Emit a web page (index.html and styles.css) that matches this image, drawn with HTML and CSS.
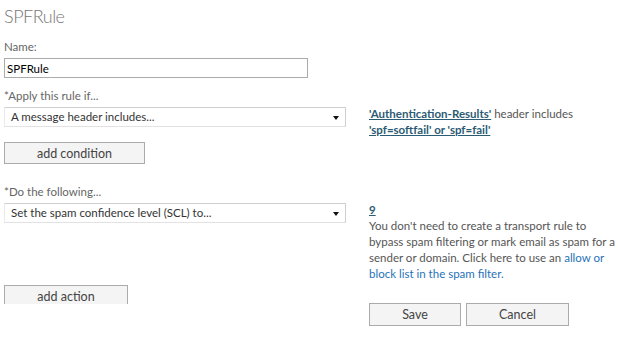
FILE: index.html
```html
<!DOCTYPE html>
<html lang="en">
<head>
    <meta charset="UTF-8">
    <title>SPFRule</title>
    <link rel="stylesheet" href="styles.css">
</head>
<body>
    <h1 class="title">SPFRule</h1>

    <div class="field-label">Name:</div>
    <input class="name-input" type="text" value="SPFRule">

    <div class="rule-row">
        <div class="rule-main">
            <div class="field-label-top">*Apply this rule if...</div>
            <div class="dropdown">A message header includes...</div>
            <button class="add-btn condition-btn">add condition</button>
        </div>
        <div class="rule-side">
            <a class="value-link" href="#">'Authentication-Results'</a> header includes
            <br>
            <a class="value-link" href="#">'spf=softfail' or 'spf=fail'</a>
        </div>
    </div>

    <div class="rule-row action-row">
        <div class="rule-main">
            <div class="field-label-top">*Do the following...</div>
            <div class="dropdown">Set the spam confidence level (SCL) to...</div>
            <div class="action-clip">
                <button class="add-btn action-btn">add action</button>
            </div>
        </div>
        <div class="rule-side">
            <a class="value-link" href="#">9</a>
            <p class="hint">
                You don't need to create a transport rule to bypass spam filtering or mark email as spam for a sender or domain. Click here to use an <a class="plain-link" href="#">allow or block list in the spam filter.</a>
            </p>
            <div class="buttons">
                <button class="footer-btn save-btn">Save</button>
                <button class="footer-btn cancel-btn">Cancel</button>
            </div>
        </div>
    </div>
</body>
</html>
```

FILE: styles.css
```css
body {
    margin: 0;
    padding: 4px 0 0 4px;
    background: #fff;
    font-family: Lato, "Open Sans", sans-serif;
    font-size: 11.5px;
    color: #555;
}
.title {
    margin: 0;
    font-size: 18px;
    line-height: 24px;
    font-weight: 300;
    letter-spacing: -0.5px;
    color: #777;
}
.field-label {
    margin-top: 11px;
    line-height: 16px;
    color: #666;
}
.field-label-top {
    line-height: 16px;
    color: #666;
}
.name-input {
    display: block;
    margin: 3px 0 0 0;
    width: 304px;
    height: 20px;
    box-sizing: border-box;
    border: 1px solid #ababab;
    padding: 0 2px;
    font-family: inherit;
    font-size: 11.5px;
    color: #000;
    outline: none;
}
.rule-row {
    display: flex;
    margin-top: 10px;
}
.action-row {
    margin-top: 20px;
}
.rule-main {
    width: 342px;
    flex-shrink: 0;
}
.rule-side {
    margin-left: 23px;
    padding-top: 18px;
    line-height: 16px;
    width: 249px;
}
.dropdown {
    position: relative;
    margin-top: 3px;
    height: 20px;
    box-sizing: border-box;
    border: 1px solid #cfcfcf;
    border-left-color: #eaeaea;
    border-bottom-color: #e2e2e2;
    padding-left: 6px;
    line-height: 18px;
    color: #333;
}
.dropdown::after {
    content: "";
    position: absolute;
    right: 6px;
    top: 8px;
    border-left: 3.5px solid transparent;
    border-right: 3.5px solid transparent;
    border-top: 4px solid #111;
}
.add-btn {
    display: block;
    height: 22px;
    box-sizing: border-box;
    border: 1px solid #ababab;
    background: #f4f4f4;
    font-family: inherit;
    font-size: 12.5px;
    color: #444;
    padding: 0;
}
.condition-btn {
    margin-top: 15px;
    width: 141px;
}
.action-clip {
    margin-top: 62px;
    height: 19px;
    overflow: hidden;
}
.action-btn {
    width: 124px;
}
.value-link {
    color: #2c5b74;
    font-weight: 700;
    text-decoration: underline;
}
.hint {
    margin: 0;
    color: #555;
}
.plain-link {
    color: #1f73b7;
    text-decoration: none;
}
.buttons {
    display: flex;
    gap: 5px;
    margin-top: 21px;
}
.footer-btn {
    height: 23px;
    box-sizing: border-box;
    border: 1px solid #ababab;
    background: #f4f4f4;
    font-family: inherit;
    font-size: 12.5px;
    color: #444;
    padding: 0;
}
.save-btn {
    width: 92px;
}
.cancel-btn {
    width: 103px;
}
```
